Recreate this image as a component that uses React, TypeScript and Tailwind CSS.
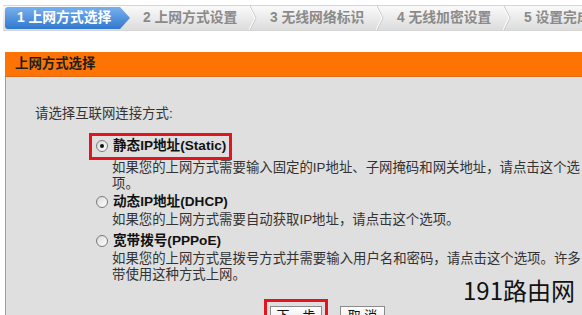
import React from 'react'

const steps = ['2 上网方式设置', '3 无线网络标识', '4 无线加密设置', '5 设置完成']

const font = "font-['Liberation_Sans','Noto_Sans_CJK_SC',sans-serif]"

function Chevron() {
    return (
        <svg width="8" height="26" viewBox="0 0 8 26" className="shrink-0">
            <polyline points="0.5,0 7,13 0.5,26" fill="none" stroke="#c4c4c4" strokeWidth="1" />
            <polyline points="-0.5,0 6,13 -0.5,26" fill="none" stroke="#ffffff" strokeWidth="1" />
        </svg>
    )
}

function Radio({ checked }: { checked?: boolean }) {
    return (
        <span className="flex h-[12px] w-[12px] shrink-0 items-center justify-center rounded-full border border-[#7a7a7a] bg-gradient-to-br from-[#d9d9d9] to-white">
            {checked && <span className="h-[4px] w-[4px] rounded-full bg-[#111]" />}
        </span>
    )
}

function Option({ label, checked }: { label: string; checked?: boolean }) {
    return (
        <div className="flex h-[20px] items-center gap-[5px] pl-[4px]">
            <Radio checked={checked} />
            <span className="whitespace-nowrap text-[13.6px] font-bold text-[#111]">{label}</span>
        </div>
    )
}

function Desc({ lines }: { lines: string[] }) {
    return (
        <div className="pl-[106px] text-[13.4px] leading-[16px] text-[#333]">
            {lines.map(l => (
                <div key={l} className="whitespace-nowrap">{l}</div>
            ))}
        </div>
    )
}

export default function App() {
    return (
        <div className={`relative h-[315px] w-[582px] overflow-hidden bg-white ${font}`}>
            {/* step bar */}
            <div className="mt-[5px] ml-[3px] flex h-[26px] items-center border-y border-[#d6d6d6] bg-gradient-to-b from-[#fafafa] to-[#dcdcdc]">
                <div className="ml-[2px] flex h-[22px] w-[125px] shrink-0 items-center rounded-l-[3px] bg-gradient-to-b from-[#78b0ec] to-[#2f78cf] pl-[12px] text-[13.8px] font-bold text-white [clip-path:polygon(0_0,calc(100%-10px)_0,100%_50%,calc(100%-10px)_100%,0_100%)]">
                    1 上网方式选择
                </div>
                {steps.map(s => (
                    <div key={s} className="flex shrink-0 items-center">
                        <div className="w-[119px] whitespace-nowrap pl-[13px] text-[13.8px] font-bold text-[#8a8a8a]">{s}</div>
                        <Chevron />
                    </div>
                ))}
            </div>

            {/* panel */}
            <div className="mt-[21px] ml-[5px]">
                <div className="flex h-[25px] items-center border-b border-[#dd6a14] bg-[#fd7304] pl-[10px] text-[13.4px] font-bold text-[#1e1e1e]">
                    上网方式选择
                </div>
                <div className="h-[240px] border-l border-[#f08a2c] bg-[#dfdfdf] pt-[29px]">
                    <div className="pl-[29px] text-[13.4px] leading-[16px] text-[#333]">请选择互联网连接方式:</div>

                    <div className="mt-[11px] ml-[83px] w-[143px] border-[3px] border-[#e2141c] pb-[1px]">
                        <Option label="静态IP地址(Static)" checked />
                    </div>
                    <Desc lines={['如果您的上网方式需要输入固定的IP地址、子网掩码和网关地址，请点击这个选', '项。']} />

                    <div className="ml-[86px]">
                        <Option label="动态IP地址(DHCP)" />
                    </div>
                    <Desc lines={['如果您的上网方式需要自动获取IP地址，请点击这个选项。']} />

                    <div className="mt-[3px] ml-[86px]">
                        <Option label="宽带拨号(PPPoE)" />
                    </div>
                    <Desc lines={['如果您的上网方式是拨号方式并需要输入用户名和密码，请点击这个选项。许多', '带使用这种方式上网。']} />

                    <div className="mt-[16px] flex items-start pl-[258px]">
                        <div className="border-[3px] border-[#e2141c] px-[3px] pt-[4px]">
                            <button className="flex h-[22px] w-[52px] items-start justify-center border border-[#8a8a8a] bg-gradient-to-b from-white to-[#e4e4e4] pt-[1px] text-[13px] leading-[15px] text-[#111]">
                                下一步
                            </button>
                        </div>
                        <button className="mt-[7px] ml-[12px] flex h-[22px] w-[45px] items-start justify-center border border-[#8a8a8a] bg-gradient-to-b from-white to-[#e4e4e4] pt-[1px] text-[13px] leading-[15px] text-[#111]">
                            取 消
                        </button>
                    </div>
                </div>
            </div>

            <div className="absolute top-[278px] left-[463px] font-['Noto_Sans_CJK_SC',sans-serif] text-[24px] leading-none text-[#111]">
                191路由网
            </div>
        </div>
    )
}
